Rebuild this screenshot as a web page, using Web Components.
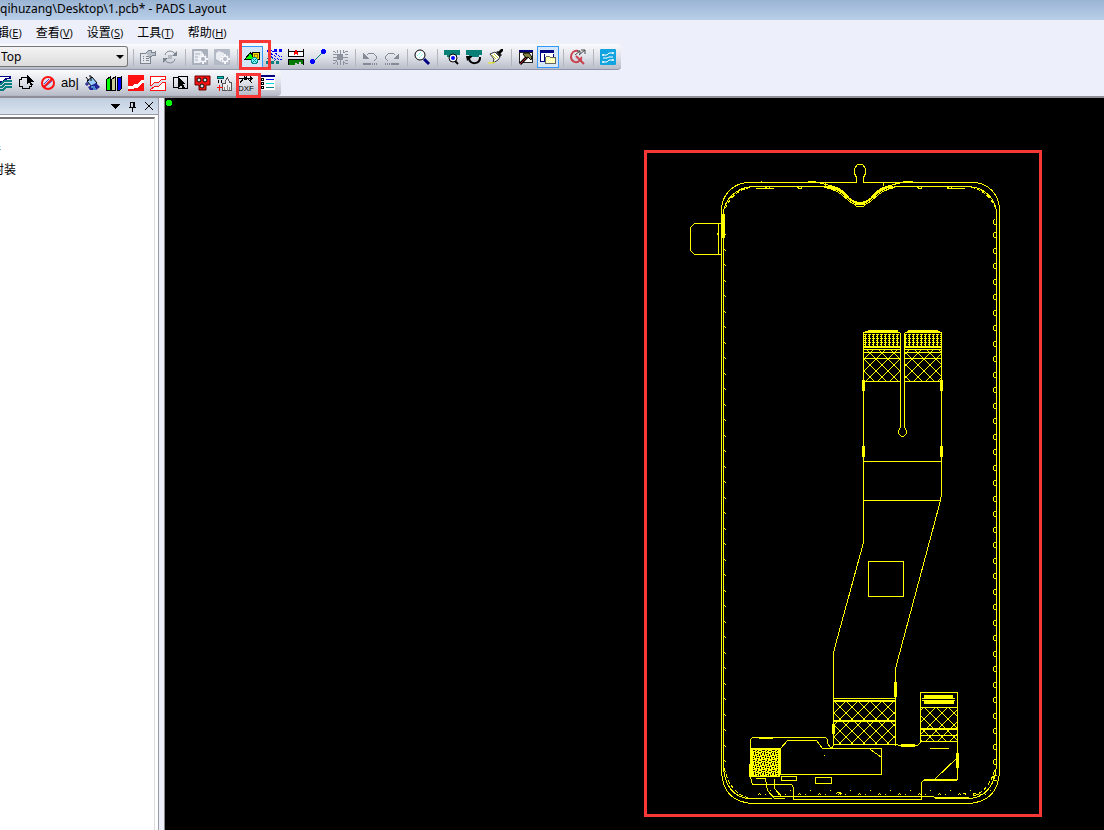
<!DOCTYPE html>
<html lang="zh">
<head>
<meta charset="utf-8">
<title>PADS Layout</title>
<style>
html,body{margin:0;height:100%}
body{font:12px/16px "Noto Sans","Noto Sans CJK SC",sans-serif;color:#000;background:#edf0fa;overflow:hidden}
</style>
</head>
<body>
<layout-app></layout-app>

<template id="t-app">
<style>
:host{display:flex;flex-direction:column;height:100vh}
main{display:flex;flex:1;min-height:0}
svg{width:16px;height:16px;display:block;shape-rendering:crispEdges;fill:none;stroke:none;overflow:visible}
svg:not(.smooth) [stroke]{transform:translate(.5px,.5px)}
.smooth{shape-rendering:auto}
.ab{font:13px/16px "Liberation Sans",sans-serif}
.dxf{font:8px "Liberation Sans",sans-serif;fill:#000}
</style>
<title-bar>qihuzang\Desktop\1.pcb* - PADS Layout</title-bar>
<menu-bar></menu-bar>
<tool-strip>
  <layer-select></layer-select>
  <tool-sep></tool-sep>
  <tool-button label="Properties"><svg viewBox="0 0 16 16"><path d="M0 4h10v10H0z" fill="#e4e7ec" stroke="#7d8590"/><path d="M2 7h1M5 7h3M2 9h1M5 9h3M2 11h1M5 11h3" stroke="#7d8590"/><path d="M5 4l3-3h3v2h4V1v5h-3L9 8" fill="#b8bec8" stroke="#7d8590"/></svg></tool-button>
  <tool-button label="Cycle"><svg class="smooth" viewBox="0 0 16 16"><path d="M3 6c1-5 8-5 10-1M13 10c-1 5-8 5-10 1" stroke="#7d8590" stroke-width="1"/><path d="M15 2v5h-5zM1 14V9h5z" fill="#7d8590"/><path d="M6 6h4v4H6z" fill="#b3b8c1"/></svg></tool-button>
  <tool-sep></tool-sep>
  <tool-button label="Sheet options"><svg class="smooth" viewBox="0 0 16 16"><rect width="16" height="16" rx="1" fill="#a9b0bc"/><path d="M2 2h7l2 2v3H8v7H2z" fill="#e9ecf2"/><path d="M3 5h5M3 8h3M3 11h3" stroke="#a9b0bc"/><path d="M11 5v10M6 10h10M8 7l6 6M14 7l-6 6" stroke="#f5f6fa" stroke-width="2"/><circle cx="11" cy="10" r="3" fill="#f5f6fa"/><circle cx="11" cy="10" r="2" fill="#a9b0bc"/></svg></tool-button>
  <tool-button label="Part options"><svg class="smooth" viewBox="0 0 16 16"><rect width="16" height="16" rx="1" fill="#b4bac5"/><path d="M2 4l3-2 5 2v2l-3 3v4l-5-3z" fill="#e9ecf2"/><path d="M11 5v10M6 10h10M8 7l6 6M14 7l-6 6" stroke="#f5f6fa" stroke-width="2"/><circle cx="11" cy="10" r="3" fill="#f5f6fa"/><circle cx="11" cy="10" r="2" fill="#b4bac5"/></svg></tool-button>
  <tool-sep></tool-sep>
  <tool-button label="Drafting" active mark="wide"><svg viewBox="0 0 16 16"><path d="M8 3h7v7H8z" fill="#fd0" stroke="#000"/><path d="M10 5h3v3h-3z" stroke="#a08000"/><path d="M0 10L6 3l4 7z" fill="#0f0" stroke="#000"/><circle cx="10" cy="11" r="3" fill="#7ff" stroke="#088"/><path d="M8 9l4 4M12 9l-4 4" stroke="#088"/></svg></tool-button>
  <tool-button label="Design"><svg viewBox="0 0 16 16"><path d="M5 1l3 2 5 4h2M4 4l4 2 4 4h3M4 7l4 2 3 3M1 1l2 2" stroke="#00f" stroke-dasharray="3 1"/><path d="M1 6h2l3 3M1 9l4 3M5 8l5 5" stroke="#088080" stroke-dasharray="2 1"/><path d="M8 0h3v3H8zM13 0h3v3h-3zM1 1h2v2H1z" fill="#00f"/><path d="M0 12h3v3H0zM5 12h3v3H5zM10 12h3v3h-3z" fill="#088080"/></svg></tool-button>
  <tool-button label="Dimension"><svg viewBox="0 0 16 16"><path d="M1 3h14v4H1z" fill="#fff"/><path d="M0 0h1v8H0zM15 0h1v8h-1zM0 2h16v1H0zM0 7h16v1H0z" fill="#000"/><path d="M7 1h2v2h1v3H9V5H7v1H6V3h1z" fill="#f00"/><path d="M0 10h16v5h-3v-2h-2v2H9v-1H7v2H0z" fill="#007a00"/><path d="M0 10h16v1H0zM0 10h1v6H0zM15 10h1v6h-1z" fill="#000"/></svg></tool-button>
  <tool-button label="Route"><svg viewBox="0 0 16 16"><path d="M3 12l9-9" stroke="#088080"/><path d="M11 1h1V0h3v1h1v3h-1v1h-3V4h-1zM0 11h1v-1h3v1h1v3H4v1H1v-1H0z" fill="#00f"/></svg></tool-button>
  <tool-button label="Component"><svg viewBox="0 0 16 16"><path d="M5 5h6v6H5z" fill="#8b929d"/><path d="M5 0v3M8 0v15M11 0v3M5 15v-3M11 15v-3M0 5h4M0 8h15M0 11h4M15 5h-3M15 11h-3M0 2h2l2 2M15 2h-2l-2 2M0 14h2l2-2M15 14h-2l-2-2" stroke="#8b929d"/></svg></tool-button>
  <tool-sep></tool-sep>
  <tool-button label="Undo"><svg viewBox="0 0 16 16"><path d="M4 6l2-2h5l3 3v2l-3 3" stroke="#848b96"/><path d="M1 4v6h6z" fill="#848b96"/><path d="M1 14h8v2H1zM10 14h1v2h-1zM12 14h1v2h-1zM14 14h1v2h-1z" fill="#848b96"/></svg></tool-button>
  <tool-button label="Redo"><svg viewBox="0 0 16 16"><path d="M11 6L9 4H4L1 7v2l3 3" stroke="#848b96"/><path d="M15 4v6H9z" fill="#848b96"/><path d="M7 14h8v2H7zM5 14h1v2H5zM3 14h1v2H3zM1 14h1v2H1z" fill="#848b96"/></svg></tool-button>
  <tool-sep></tool-sep>
  <tool-button label="Zoom"><svg class="smooth" viewBox="0 0 16 16"><path d="M10 10l5 5" stroke="#000080" stroke-width="3"/><circle cx="6" cy="6" r="5" fill="#fff" stroke="#000" stroke-width="1"/><path d="M3 7l4-4M5 9l4-4" stroke="#6ee" stroke-dasharray="2 1"/></svg></tool-button>
  <tool-sep></tool-sep>
  <tool-button label="View board"><svg class="smooth" viewBox="0 0 16 16"><path d="M0 1h16v5h-3v2H3V6H0z" fill="#088078"/><circle cx="9" cy="9" r="4" fill="#fff" stroke="#000"/><circle cx="9" cy="9" r="2" fill="#00f"/><path d="M11 12l3 3" stroke="#000" stroke-width="2"/></svg></tool-button>
  <tool-button label="Redraw"><svg class="smooth" viewBox="0 0 16 16"><path d="M0 1h16v5h-3v2H3V6H0z" fill="#088078"/><path d="M14 8c1 8-11 8-11 1" stroke="#000" stroke-width="2"/><path d="M0 7h6v1l-5 4z" fill="#000"/></svg></tool-button>
  <tool-button label="Brush"><svg class="smooth" viewBox="0 0 16 16"><path d="M2 5l5-2 5 5-2 3-5 3 1-4z" fill="#fff" stroke="#333"/><path d="M8 3l2-1 4 4-2 2z" fill="#222"/><path d="M10 3l3-3h2v2l-3 3z" fill="#000"/><path d="M4 6l4 4M6 5l4 4" stroke="#cc3"/><path d="M0 14h4l3-1" stroke="#ee0"/></svg></tool-button>
  <tool-sep></tool-sep>
  <tool-button label="Build"><svg class="smooth" viewBox="0 0 16 16"><path d="M1 1h14v13H1z" fill="#222"/><path d="M2 4h12v9H2z" fill="#fff"/><path d="M1 1h14v2H1z" fill="#000080"/><path d="M9 8l-7 7" stroke="#000" stroke-width="3"/><path d="M9 8l-7 7" stroke="#a22"/><path d="M5 5l2-1h4l3 4-1 3-3-3-2 1z" fill="#884" stroke="#000"/></svg></tool-button>
  <tool-button label="Project explorer" active><svg viewBox="0 0 16 16"><path d="M0 1h14v12H0z" fill="#fff"/><path d="M0 1h14v3H0z" fill="#000080"/><path d="M0 1v11h5M4 4v8M13 4v3" stroke="#000080"/><path d="M5 8l1-1h3l1 1h5v6H5z" fill="#ffa" stroke="#666"/><path d="M6 10h8M6 12h8" stroke="#fff" stroke-dasharray="1 1"/></svg></tool-button>
  <tool-sep></tool-sep>
  <tool-button label="Quick search"><svg class="smooth" viewBox="0 0 16 16"><path d="M8 2C4 1 1 4 1 8s5 7 8 4 2-4 2-4M6 7l8 8M11 10v3" stroke="#c84450" stroke-width="2"/><path d="M5 6l5-4M9 6l6-5M7 2h3v3M11 1h4v4" stroke="#444"/></svg></tool-button>
  <tool-sep></tool-sep>
  <tool-button label="Router"><svg class="smooth" viewBox="0 0 16 16"><rect width="16" height="16" rx="1" fill="#12a4e0"/><path d="M3 6h4l2-2h4M3 9h4l2-1h4M3 13h4l2-2h4" stroke="#fff"/><circle cx="3" cy="6" r="1" fill="#fff"/><circle cx="13" cy="4" r="1" fill="#fff"/><circle cx="3" cy="13" r="1" fill="#fff"/><circle cx="13" cy="11" r="1" fill="#fff"/></svg></tool-button>
</tool-strip>
<tool-strip second>
  <tool-button label="Copper"><svg viewBox="0 0 16 16"><path d="M0 1h15v3h-4l-4 4H0z" fill="#000080"/><path d="M0 2h13v1h-3L6 6H0z" fill="#fff"/><path d="M0 8h5l4-3h6M0 11h6l3-3h6M0 14h7l3-3h5" stroke="#088080" stroke-width="2"/></svg></tool-button>
  <tool-button label="Board outline"><svg viewBox="0 0 16 16"><path d="M8 2H3v2H1v7h3v2h7v-2h2v-1" stroke="#000"/><path d="M9 0v9l2-2 2 4 2-1-2-3h3z" fill="#000"/></svg></tool-button>
  <tool-button label="Keepout"><svg class="smooth" viewBox="0 0 16 16"><path d="M2 11h4l6-5M9 4l-5 5" stroke="#44d"/><circle cx="8" cy="8" r="6" stroke="#f11" stroke-width="2"/><path d="M4 12l8-8" stroke="#f11" stroke-width="2"/></svg></tool-button>
  <tool-button label="Text"><span class="ab">ab|</span></tool-button>
  <tool-button label="Fill"><svg class="smooth" viewBox="0 0 16 16"><path d="M3 6l5-4 5 6-5 4z" fill="#9cf" stroke="#000"/><path d="M5 1h2v5M2 2l3 4" stroke="#000"/><path d="M4 12l8-4 4 4-4 3H6z" fill="#229"/><path d="M1 9h4M3 7v4" stroke="#000080"/><path d="M7 12h4M9 14h3" stroke="#7ef"/></svg></tool-button>
  <tool-button label="Library"><svg viewBox="0 0 16 16"><path d="M0 4l4-3v14H0z" fill="#0f0" stroke="#000"/><path d="M5 4l4-3v14H5z" fill="#cc9" stroke="#000"/><path d="M11 2h3l1-1v12l-2 2h-2z" fill="#00f" stroke="#000"/></svg></tool-button>
  <tool-button label="Plane"><svg viewBox="0 0 16 16"><path d="M0 0h16v16H0z" fill="#f11"/><path d="M0 11h4l3-2h3l3-4h3v3h-2l-4 5H7l-3 1H0z" fill="#fff"/></svg></tool-button>
  <tool-button label="Plane cutout"><svg viewBox="0 0 16 16"><path d="M0 1h15v3h-4L8 7H4l-3 3H0z" fill="#fff" stroke="#f11"/><path d="M0 14l4-3h4l4-4h3v8H0z" fill="#fff" stroke="#f11"/></svg></tool-button>
  <tool-button label="Copy shape"><svg viewBox="0 0 16 16"><path d="M6 2H1v10h5M6 1h9v12H6z" stroke="#000"/><path d="M7 3v9l2-2 2 4 2-1-2-4h3z" fill="#000"/></svg></tool-button>
  <tool-button label="Pads"><svg class="smooth" viewBox="0 0 16 16"><path d="M1 1h15v9h-4v5H5v-5H1z" fill="#f11" stroke="#600"/><circle cx="5" cy="5" r="2" fill="#ddd" stroke="#000"/><circle cx="11" cy="5" r="2" fill="#ddd" stroke="#000"/><circle cx="8" cy="11" r="2" fill="#ddd" stroke="#000"/></svg></tool-button>
  <tool-button label="Wizard"><svg viewBox="0 0 16 16"><path d="M1 1h6v2H1z" fill="#0cc" stroke="#055"/><path d="M9 5l2-3 2 5h2v8H6V8h3z" fill="#eee" stroke="#555"/><path d="M8 11v3M11 9v6M13 11v3" stroke="#888"/><path d="M3 9v6M0 12h6" stroke="#f11"/><path d="M2 4v3M5 4v3" stroke="#000"/></svg></tool-button>
  <tool-button label="Import DXF" mark><svg viewBox="0 0 16 16"><path d="M0 3h14M5 3L1 8M9 3l5 5M5 0l2 2 2-2" stroke="#000"/><path d="M12 1l3 2-3 3zM6 2h3v3H6z" fill="#000"/><text class="dxf" x="0" y="16">DXF</text></svg></tool-button>
  <tool-button label="List"><svg viewBox="0 0 16 16"><path d="M0 2h15v13H0z" fill="#fff"/><path d="M0 0h15v2H0z" fill="#000080"/><path d="M1 3h2v2H1zM1 7h2v2H1zM1 11h2v2H1z" stroke="#000"/><path d="M5 4h8" stroke="#00f"/><path d="M5 8h8" stroke="#0dd"/><path d="M5 12h8" stroke="#088080"/></svg></tool-button>
</tool-strip>
<main><side-panel></side-panel><board-view></board-view></main>
</template>

<template id="t-title">
<style>
:host{display:block;height:20px;background:linear-gradient(#9ab4d3,#b9cfe9);line-height:18px;white-space:nowrap;overflow:hidden}
</style><slot></slot>
</template>

<template id="t-menu">
<style>
:host{display:block;overflow:hidden}
nav{display:flex;gap:14px;height:24px;align-items:center;margin-left:-3px}
button{all:unset;white-space:nowrap;font:12px/16px "Noto Sans CJK SC",sans-serif}
span{font:11px/16px "Open Sans",sans-serif}
</style>
<nav><button>辑<span>(<u>E</u>)</span></button><button>查看<span>(<u>V</u>)</span></button><button>设置<span>(<u>S</u>)</span></button><button>工具<span>(<u>T</u>)</span></button><button>帮助<span>(<u>H</u>)</span></button></nav>
</template>

<template id="t-strip">
<style>
:host{display:flex;overflow:clip;overflow-clip-margin:4px;position:relative;z-index:1}
:host([second]){z-index:2}
div{display:flex;height:25px;padding-right:2px;background:linear-gradient(#fafbfd,#dfe2e9 50%,#b9bdc8);border-bottom:1px solid #9095ad;border-radius:0 4px 4px 0}
:host([second]){border-bottom:2px solid #8f8f98}
:host([second]) div{margin-left:-7px;border-bottom-color:#b4b8c6}
</style><div><slot></slot></div>
</template>

<template id="t-button">
<style>
:host{display:block;width:22px;height:25px;position:relative}
button{all:unset;box-sizing:border-box;width:22px;height:22px;margin-top:2px;display:flex;align-items:center;justify-content:center;white-space:nowrap}
:host([active]) button{border:1px solid #3399ff;background:#d5e6f8}
:host([mark])::after{content:"";position:absolute;box-sizing:border-box;border:3px solid #fa3737;left:1px;top:3px;width:25px;height:25px;z-index:2}
:host([mark=wide])::after{left:-2px;top:-4px;width:32px;height:30px}
</style><button><slot></slot></button>
</template>

<template id="t-sep">
<style>:host{display:block;width:8px}i{display:block;width:1px;height:17px;margin:5px 0 0 4px;background:#b3b6be}</style><i></i>
</template>

<template id="t-layer">
<style>
:host{display:flex;width:129px;align-items:flex-start;position:relative}
select{appearance:none;box-sizing:border-box;width:128px;height:21px;margin:2px 0 0;padding:0 0 0 1px;border:1px solid #777;border-left:0;border-radius:0 3px 3px 0;background:linear-gradient(#f4f4f4,#dcdcdc);font:12px/16px "Noto Sans",sans-serif;color:#000}
i{position:absolute;right:5px;top:11px;border:4px solid transparent;border-top-color:#000;border-bottom:0}
</style><select aria-label="Layer"><option>Top</option></select><i></i>
</template>

<template id="t-side">
<style>
:host{display:flex;flex-direction:column;width:159px;box-sizing:border-box;border-right:1px solid #999ba5;background:#fff}
header{display:flex;justify-content:flex-end;align-items:flex-end;height:16px;padding-right:1px;gap:1px;background:linear-gradient(#c0cedf,#dae3f0);border-bottom:1px solid #999ba5}
button{all:unset;width:16px;height:17px}
svg{display:block;width:16px;height:16px;fill:none;stroke:#000;shape-rendering:crispEdges}
section{flex:1;margin:2px 3px 0 0;border-top:2px solid #777;border-right:1px solid #ddd;overflow:hidden}
ul{list-style:none;margin:20px 0 0;padding:0;font:12px/20px "Noto Sans CJK SC",sans-serif}
li{margin-left:-8px}
li.short{margin-left:-11px}
</style>
<header><button aria-label="Menu"><svg viewBox="0 0 16 16"><path d="M3 6h10L8 11z" fill="#000" stroke="none"/></svg></button><button aria-label="Pin"><svg viewBox="0 0 16 16"><path d="M6 4h4v5H6zM4 9h7M8 9v4M9 4v5" transform="translate(.5 .5)"/></svg></button><button aria-label="Close"><svg viewBox="0 0 16 16" style="shape-rendering:auto"><path d="M4 4l8 8M12 4l-8 8"/></svg></button></header>
<section><ul><li class="short">件</li><li>封装</li></ul></section>
</template>

<template id="t-board">
<style>
:host{display:block;flex:1;min-width:0;margin-left:5px;border-left:1px solid #888;background:#000;overflow:hidden}
svg{display:block;width:100%;height:100%;fill:none;stroke:#ff0;shape-rendering:crispEdges}
.solid{fill:#ff0;stroke:none}
</style>
<svg role="img" aria-label="Board drawing">
<defs>
<pattern id="hatch" width="12" height="12" patternUnits="userSpaceOnUse" x="864" y="359"><path d="M0 0l12 12M12 0L0 12" stroke="#ff0"/></pattern>
<pattern id="mesh" width="4" height="4" patternUnits="userSpaceOnUse" x="864" y="334"><path d="M0 0h3v1H0zM0 2h1v1H0zM1 0h1v4H1z" fill="#ff0" stroke="none"/></pattern>
<pattern id="grain" width="10" height="10" patternUnits="userSpaceOnUse" x="751" y="749"><path d="M1 1h3v1H1zM6 0h1v2H6zM8 2h2v1H8zM0 4h1v2H0zM3 3h1v3H3zM5 4h2v1H5zM8 5h1v2H8zM1 7h2v1H1zM4 7h1v2H4zM6 8h2v1H6zM2 9h1v1H2zM9 8h1v2H9zM6 6h1v1H6zM5 2h1v1H5zM1 3h1v1H1z" fill="#000" stroke="none"/></pattern>
</defs>
<g transform="translate(-165 -98)">
<circle cx="169" cy="103" r="3" fill="#0f0" stroke="none"/>
<rect x="645.5" y="151.5" width="395" height="664" stroke="#fa3737" stroke-width="3"/>
<g transform="translate(.5 .5)">
<path d="M856 182H749C733 182 721 194 721 210V768C721 792 733 803 755 803H965C987 803 999 792 999 768V210C999 194 988 182 972 182H863"/>
<path d="M825 186H752C736 187 723 199 723 214V763C723 786 734 798 750 798H771M893 186H968C985 187 996 199 996 214V764C995 786 984 797 969 798H935L933 796H771M793 799H921"/>
<path d="M725 208C729 197 739 188 751 187M995 208C991 197 981 188 970 187M724 768C728 786 737 795 748 797M994 770C990 785 981 793 972 796" stroke-dasharray="4 2"/>
<path d="M856 182V177L854 173V168L857 164H862L865 168V173L863 177V182M825 182V185M883 182V185M755 188H773M946 188H964"/>
<path d="M807 182L809 181H813L826 184 836 187C847 191 849 202 856 203H863C870 202 872 191 883 187L893 184 905 181H912"/>
<path d="M825 186C844 187 847 202 857 202H862C872 202 875 187 893 186" stroke-width="2"/>
<path d="M824 187C842 189 847 203 855 204H864C872 203 877 189 895 187M853 203L856 206H863L866 203"/>
<path d="M721 223H694L690 227V250L694 254H721M718 223V254M717 232v2"/>
<path d="M863 381V332L866 331H897L900 333V427M904 427V333L907 331H938L941 332V494L940 500 895 668V745M863 381V542L834 648 833 653V744M863 461H941M863 500H940M863 381H900M904 381H941M863 358H900M904 358H941M863 349H900M904 349H941"/>
<path d="M900 427L898 430V433L901 436H903L906 433V430L904 427M868 561H903V596H868z"/>
<path d="M833 698H895M833 744H895L900 745H917L920 742V692H957V779H924L921 782V799M920 707H957M920 735H957M920 741H957M929 748H948M934 779L957 757"/>
<path d="M750 777V739L752 737H825L827 739V743L830 747H832L833 744M780 774V748L787 740H816L822 748H881V774H780M870 749L881 757M781 776H796V780H781zM815 777H831V783H815z"/>
<path d="M750 777L752 784H791L793 787V799M755 778H765L767 790 774 798H784M774 778V788L782 797M750 748H779V776H750z"/>
<path id="bumps"/>
</g>
<path class="solid" d="M868 330h30v2h-30zM865 332h35v1h-35zM908 330h30v2h-30zM906 332h34v1h-34zM863 346h38v2h-38zM904 346h38v2h-38zM863 352h38v1h-38zM904 352h38v1h-38zM862 380h3v11h-3zM940 380h3v11h-3zM862 446h3v11h-3zM940 446h3v11h-3zM894 682h3v15h-3zM832 724h3v10h-3zM833 700h63v2h-63zM833 720h63v2h-63zM901 744h14v3h-14zM924 695h29v3h-29zM922 698h33v1h-33zM922 700h33v1h-33zM924 701h30v3h-30zM920 728h38v2h-38zM956 753h3v15h-3zM924 779h33v2h-33zM759 737h14v2h-14zM749 764h3v13h-3zM750 748h29v28h-29zM935 797h34v2h-34zM722 214h3v24h-3z"/>
<path fill="url(#grain)" stroke="none" d="M753 750h25v26h-25z"/>
<path fill="url(#mesh)" stroke="none" d="M864 334h36v12h-36zM905 334h36v12h-36z"/>
<path fill="url(#hatch)" stroke="none" d="M864 350h36v31h-36zM905 350h36v31h-36zM834 702h61v42h-61zM921 708h36v33h-36z"/>
</g>
</svg>
</template>

<script>
const define = (name, templateId, setup) => customElements.define(name, class extends HTMLElement {
  constructor() {
    super();
    const root = this.attachShadow({mode: 'open'});
    root.append(document.getElementById(templateId).content.cloneNode(true));
    if (setup) setup(root, this);
  }
});
define('title-bar', 't-title');
define('menu-bar', 't-menu');
define('tool-strip', 't-strip');
define('tool-sep', 't-sep');
define('layer-select', 't-layer');
define('side-panel', 't-side');
define('tool-button', 't-button', (root, host) => {
  root.querySelector('button').setAttribute('aria-label', host.getAttribute('label') || '');
});
define('board-view', 't-board', root => {
  let d = 'M994 219l-1 1v3l1 1h2';
  for (let i = 0; i < 36; i++) {
    const y = 234 + Math.round(i * 15.5);
    d += `M996 ${y - 2}h-2l-1 1v3l1 1h2M724 ${y - 1}l1 1-1 1`;
  }
  for (let i = 0; i < 12; i++) {
    const x = 757 + i * 20;
    d += `M${x} 795l2-2 2 2M${x + 7} 794h1M${x + 12} 790h1`;
  }
  for (const x of [767, 799, 919, 949]) d += `M${x - 2} 187l2 1h1l2-1`;
  d += 'M760 181h1M823 755h1M962 793h3M973 792v3M972 793h3M835 794l2-2h3l1 2';
  root.getElementById('bumps').setAttribute('d', d);
});
define('layout-app', 't-app');
</script>
</body>
</html>
